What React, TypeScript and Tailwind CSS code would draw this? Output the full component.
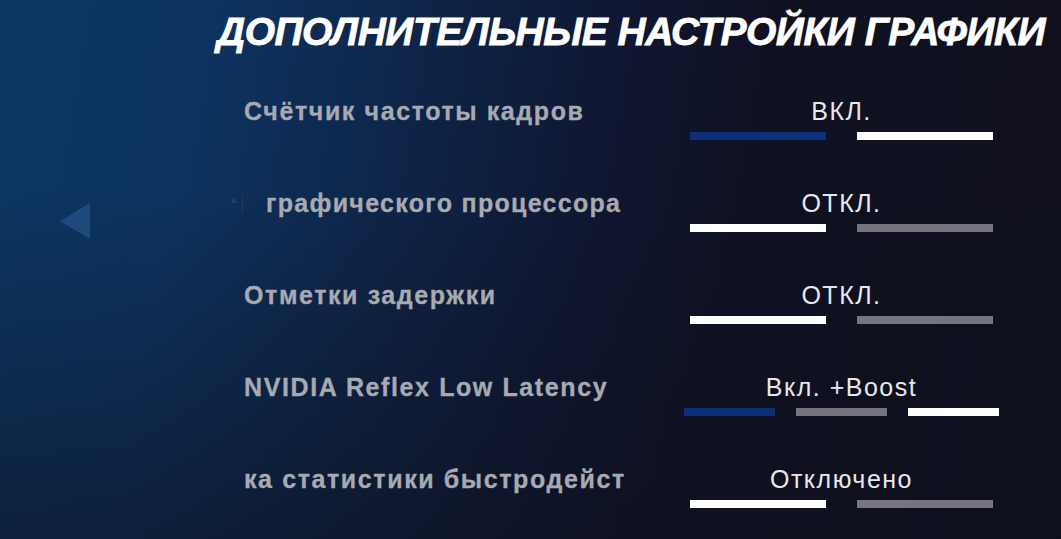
import { ReactNode } from 'react';

type Tone = 'blue' | 'white' | 'gray';

interface SettingRow {
  label: ReactNode;
  value: string;
  bars: Tone[];
  indent?: boolean;
}

const rows: SettingRow[] = [
  { label: 'Счётчик частоты кадров', value: 'ВКЛ.', bars: ['blue', 'white'] },
  { label: 'графического процессора', value: 'ОТКЛ.', bars: ['white', 'gray'], indent: true },
  { label: 'Отметки задержки', value: 'ОТКЛ.', bars: ['white', 'gray'] },
  { label: 'NVIDIA Reflex Low Latency', value: 'Вкл. +Boost', bars: ['blue', 'gray', 'white'] },
  { label: 'ка статистики быстродействия', value: 'Отключено', bars: ['white', 'gray'] },
];

const toneClass: Record<Tone, string> = {
  blue: 'bg-[#0d2e78]',
  white: 'bg-white',
  gray: 'bg-[#76757f]',
};

function OptionBars({ bars }: { bars: Tone[] }) {
  const three = bars.length === 3;
  return (
    <div className={`flex justify-center ${three ? 'gap-[21px]' : 'gap-[31px]'}`}>
      {bars.map((tone, i) => (
        <div key={i} className={`h-[8px] ${three ? 'w-[91px]' : 'w-[136px]'} ${toneClass[tone]}`} />
      ))}
    </div>
  );
}

export default function App() {
  return (
    <div
      className="relative w-[1061px] h-[539px] overflow-hidden bg-[linear-gradient(to_bottom,rgba(14,16,30,0)_35%,rgba(14,16,30,0.55)_100%),linear-gradient(100deg,#0c3763_0%,#0d3360_18%,#0e2447_38%,#0f1631_55%,#0f1122_68%,#0f0f1c_100%)]"
      style={{ fontFamily: '"Liberation Sans", Arial, sans-serif' }}
    >
      {/* back arrow */}
      <svg className="absolute left-[60px] top-[203px]" width="30" height="36" viewBox="0 0 30 36">
        <polygon points="30,0 30,36 0,18" fill="#1f4a7c" />
      </svg>

      {/* faint leftovers of the scrolling label */}
      <div className="absolute left-[229px] top-[196px] text-[9px] leading-none text-[#2a4466]">▲</div>
      <div className="absolute left-[242px] top-[196px] w-[1px] h-[17px] bg-[#213a5c]" />

      <h1 className="pl-[217px] pt-[11px] text-[39px] leading-[42px] font-black italic uppercase text-white tracking-[-0.5px] whitespace-nowrap [-webkit-text-stroke:0.8px_white]">
        Дополнительные настройки графики
      </h1>

      <div className="mt-[43px] flex flex-col">
        {rows.map((row, i) => (
          <div key={i} className="flex h-[92px]">
            <div className="ml-[244px] w-[381px] h-[30px] overflow-hidden whitespace-nowrap">
              <span
                className={`block text-[25px] leading-[30px] font-bold text-[#a8aab2] [-webkit-text-stroke:0.3px_#a8aab2] ${
                  row.indent ? 'pl-[22px] tracking-[1.3px]' : 'tracking-[1.6px]'
                }`}
              >
                {row.label}
              </span>
            </div>
            <div className="ml-[59px] w-[315px]">
              <div className="h-[30px] text-center text-[25px] leading-[30px] text-[#e8e8ec] tracking-[1.5px]">
                {row.value}
              </div>
              <div className="mt-[6px]">
                <OptionBars bars={row.bars} />
              </div>
            </div>
          </div>
        ))}
      </div>
    </div>
  );
}
